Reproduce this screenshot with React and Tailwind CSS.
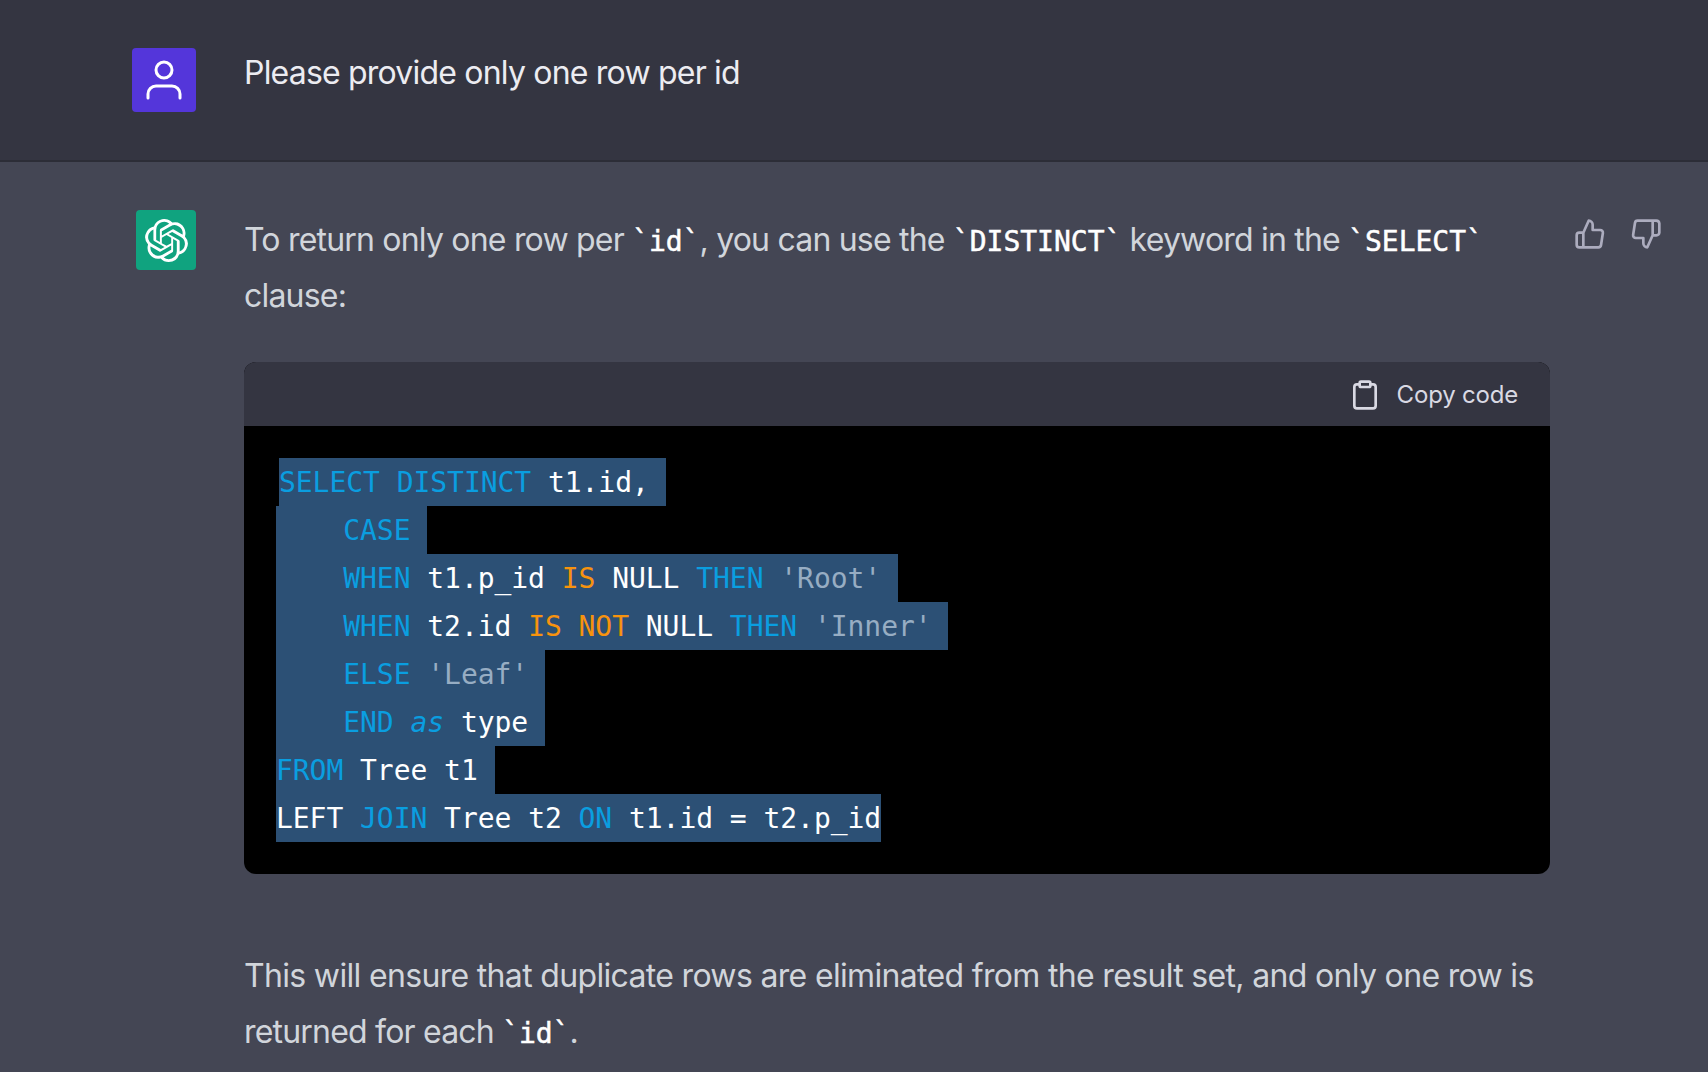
import React from "react";
import { FiUser, FiThumbsUp, FiThumbsDown, FiClipboard } from "react-icons/fi";
import { SiOpenai } from "react-icons/si";

const K = ({ children }) => <span className="text-[#0a9ee0]">{children}</span>;
const O = ({ children }) => <span className="text-[#f7930e]">{children}</span>;
const S = ({ children }) => <span className="text-[#97adc3]">{children}</span>;

const lines = [
  <><K>SELECT DISTINCT</K> t1.id, </>,
  <>    <K>CASE</K> </>,
  <>    <K>WHEN</K> t1.p_id <O>IS</O> NULL <K>THEN</K> <S>'Root'</S> </>,
  <>    <K>WHEN</K> t2.id <O>IS</O> <O>NOT</O> NULL <K>THEN</K> <S>'Inner'</S> </>,
  <>    <K>ELSE</K> <S>'Leaf'</S> </>,
  <>    <K>END</K> <span className="text-[#0a9ee0] italic">as</span> type </>,
  <><K>FROM</K> Tree t1 </>,
  <>LEFT <K>JOIN</K> Tree t2 <K>ON</K> t1.id = t2.p_id</>,
];

function Code({ children }) {
  return <code className="font-['DejaVu_Sans_Mono',monospace] text-[28px] leading-none font-normal text-white tracking-normal [-webkit-text-stroke:0.5px_white]">{children}</code>;
}

export default function App() {
  return (
    <div className="h-[1072px] overflow-hidden bg-[#444654] font-['Inter',sans-serif] text-[32px] leading-[56px] tracking-[-0.8px]">
      {/* user message */}
      <div className="h-[162px] bg-[#343541] border-b-2 border-[#2c2d37] flex pl-[132px] pt-[45px] gap-[48px]">
        <div className="mt-[3px] w-16 h-16 rounded-[4px] bg-[#5436da] flex items-center justify-center text-white">
          <FiUser className="w-[48px] h-[48px] stroke-[1.5]" />
        </div>
        <div className="text-[#ececf1]">Please provide only one row per id</div>
      </div>

      {/* answer */}
      <div className="flex pl-[132px] pt-[48px]">
        <div className="w-16 flex justify-end mr-[48px] shrink-0">
          <div className="w-[60px] h-[60px] rounded-[4px] bg-[#10a37f] flex items-center justify-center text-white">
            <SiOpenai className="w-[43px] h-[43px]" />
          </div>
        </div>

        <div className="w-[1306px] shrink-0 text-[#d1d5db]">
          <p className="pt-[2px]">
            To return only one row per <Code>`id`</Code>, you can use the <Code>`DISTINCT`</Code> keyword in the <Code>`SELECT`</Code> clause:
          </p>

          <div className="mt-[38px] rounded-[12px] overflow-hidden bg-black">
            <div className="h-16 pt-[2px] bg-[#343541] flex items-center justify-end gap-4 pr-8 text-[24px] tracking-[-0.2px] text-[#d9d9e3]">
              <FiClipboard className="w-8 h-8" />
              <span>Copy code</span>
            </div>
            <pre className="p-8 font-['DejaVu_Sans_Mono',monospace] text-[28px] leading-[48px] tracking-[-0.05px] text-white">
              {lines.map((line, i) => (
                <div key={i} className={i === 0 ? "h-12 pt-px w-fit bg-[#2c5075] ml-[3px]" : "h-12 pt-px w-fit bg-[#2c5075]"}>{line}</div>
              ))}
            </pre>
          </div>

          <p className="mt-[73px] pt-px">
            <span className="tracking-[-0.67px]">This will ensure that duplicate rows are eliminated from the result set, and only one row is</span> returned for each <Code>`id`</Code>.
          </p>
        </div>

        <div className="flex gap-6 ml-6 pt-2 h-fit text-[#acacbe]">
          <FiThumbsUp className="w-8 h-8" />
          <FiThumbsDown className="w-8 h-8" />
        </div>
      </div>
    </div>
  );
}
